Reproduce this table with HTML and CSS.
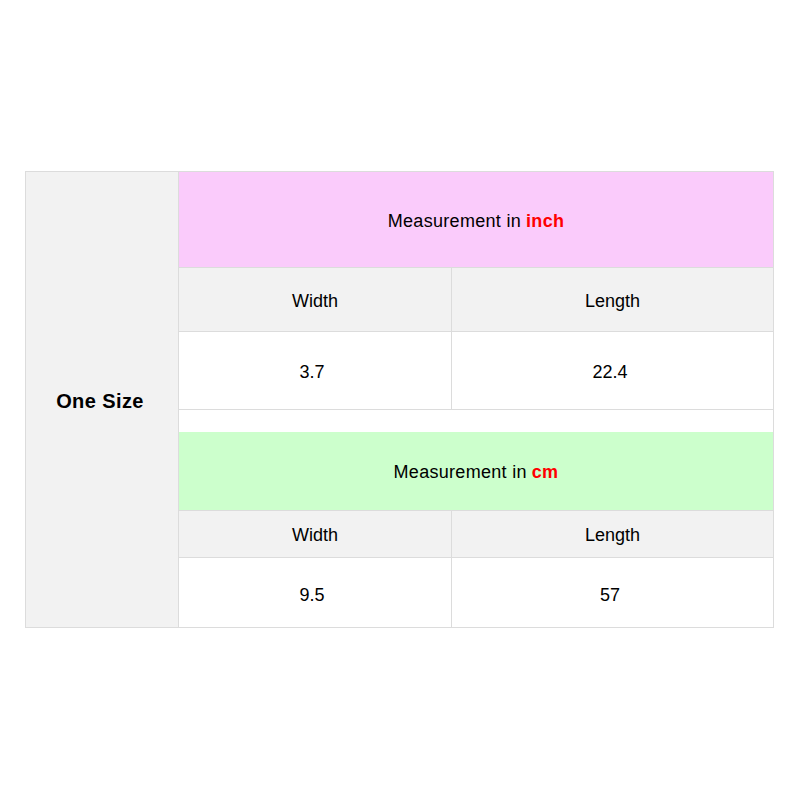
FILE: index.html
```html
<!DOCTYPE html>
<html>
<head>
<meta charset="utf-8">
<link rel="stylesheet" href="styles.css">
</head>
<body>
<div class="chart">
  <div class="size-cell">One Size</div>
  <div class="data">
    <div class="head head-inch">Measurement in <span class="unit">inch</span></div>
    <div class="row row-labels r1"><div class="c c1">Width</div><div class="c c2">Length</div></div>
    <div class="row row-values r2"><div class="c c1">3.7</div><div class="c c2">22.4</div></div>
    <div class="gap"></div>
    <div class="head head-cm">Measurement in <span class="unit">cm</span></div>
    <div class="row row-labels r3"><div class="c c1">Width</div><div class="c c2">Length</div></div>
    <div class="row row-values r4"><div class="c c1">9.5</div><div class="c c2">57</div></div>
  </div>
</div>
</body>
</html>
```
FILE: styles.css
```css
* { box-sizing: border-box; }
html, body { margin: 0; padding: 0; background: #fff; }
body {
  font-family: "Liberation Sans", Arial, sans-serif;
  color: #000;
  padding: 171px 0 0 25px;
}
.chart {
  display: flex;
  width: 749px;
  border: 1px solid #dcdcdc;
}
.size-cell {
  width: 153px;
  background: #f2f2f2;
  border-right: 1px solid #dcdcdc;
  display: flex;
  align-items: center;
  justify-content: center;
  font-weight: bold;
  font-size: 20px;
  letter-spacing: 0.4px;
  padding-right: 4px;
  padding-top: 4px;
}
.data {
  flex: 1;
  display: flex;
  flex-direction: column;
}
.head {
  display: flex;
  align-items: center;
  justify-content: center;
  font-size: 18px;
  letter-spacing: 0.3px;
  border-bottom: 1px solid #dcdcdc;
  padding-top: 3px;
}
.head-inch { height: 96px; background: #facbfb; }
.head-cm { height: 79px; background: #ccffcc; }
.unit { color: #f00; font-weight: bold; margin-left: 5px; }
.row {
  display: flex;
  font-size: 18px;
  border-bottom: 1px solid #dcdcdc;
}
.row-labels { background: #f2f2f2; }
.row-values { background: #fff; }
.r1 { height: 64px; }
.r2 { height: 78px; }
.r3 { height: 47px; }
.r4 { height: 69px; border-bottom: none; }
.c {
  display: flex;
  align-items: center;
  justify-content: center;
  padding-top: 3px;
}
.c1 { width: 273px; border-right: 1px solid #dcdcdc; }
.c2 { flex: 1; }
.row-values .c1 { padding-right: 6px; }
.row-values .c2 { padding-right: 5px; }
.r4 .c { padding-top: 5px; }
.gap { height: 22px; background: #fff; }
```
